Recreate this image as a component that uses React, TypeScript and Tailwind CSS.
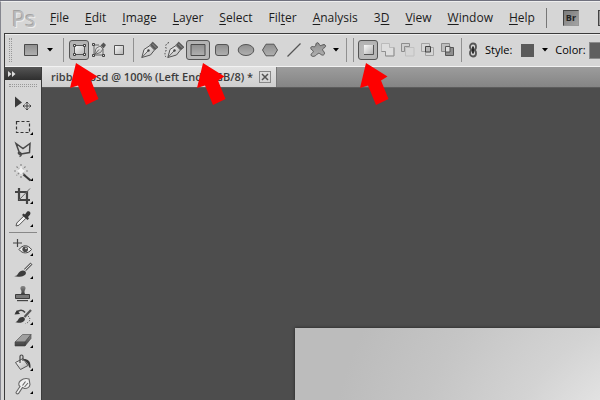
import React from "react";
import clsx from "clsx";

const menus = [
  { label: "File", key: 0 },
  { label: "Edit", key: 0 },
  { label: "Image", key: 0 },
  { label: "Layer", key: 0 },
  { label: "Select", key: 0 },
  { label: "Filter", key: 3 },
  { label: "Analysis", key: 0 },
  { label: "3D", key: 1 },
  { label: "View", key: 0 },
  { label: "Window", key: 0 },
  { label: "Help", key: 0 },
];

const stroke = { stroke: "#484848", strokeWidth: 1.2, fill: "none" };

// Shared gradients for the toolbar and the tool icons
function Gradients() {
  return (
    <svg width="0" height="0" className="absolute" aria-hidden="true">
      <defs>
        <linearGradient id="fill" x1="0" y1="0" x2="0" y2="1">
          <stop offset="0" stopColor="#8f8f8f" />
          <stop offset="1" stopColor="#b0b0b0" />
        </linearGradient>
        <linearGradient id="pale" x1="0" y1="0" x2="1" y2="1">
          <stop offset="0" stopColor="#fafafa" />
          <stop offset="1" stopColor="#b4b4b4" />
        </linearGradient>
        <linearGradient id="dark" x1="0" y1="0" x2="0" y2="1">
          <stop offset="0" stopColor="#8b8b8b" />
          <stop offset="1" stopColor="#3d3d3d" />
        </linearGradient>
      </defs>
    </svg>
  );
}

function Svg({ children }: { children: React.ReactNode }) {
  return (
    <svg width="20" height="20" viewBox="0 0 20 20" className="shrink-0" aria-hidden="true">
      {children}
    </svg>
  );
}

function Caret({ label }: { label: string }) {
  return (
    <button aria-label={label} className="flex h-5 w-3 shrink-0 items-center justify-center">
      <svg width="6" height="4" viewBox="0 0 6 4" aria-hidden="true">
        <path d="M0 0h6L3 3.5z" fill="#000" />
      </svg>
    </button>
  );
}

const Divider = () => <div className="h-6 w-px shrink-0 bg-[#909090]" />;

const Nib = () => (
  <>
    <path d="M1.8 17.5L4 9.500 10 5.500 14.500 10 10.500 15z" fill="url(#pale)" stroke="#555" />
    <path d="M2 17.300l6-6.300" stroke="#555" strokeWidth="0.900" />
    <circle cx="8.500" cy="10.500" r="1.200" fill="#444" />
    <path d="M10.200 4.800L12.700 2 18 7.200 15 9.800z" fill="#5a5a5a" stroke="#444" strokeWidth="0.600" />
    <path d="M12.300 3.800l4 4" stroke="#9a9a9a" strokeWidth="0.900" />
  </>
);

const modes = [
  {
    label: "Shape layers",
    icon: (
      <>
        <path d="M5.500 5.500h10v9h-10z" fill="url(#pale)" stroke="#565656" />
        {[4, 14].map((x) => [4, 13].map((y) => <path key={x + "-" + y} d={`M${x + 0.5} ${y + 0.5}h2v2h-2z`} fill="#eee" stroke="#3f3f3f" />))}
      </>
    ),
  },
  {
    label: "Paths",
    icon: (
      <>
        <path d="M5 6v9h9V9M5 5h5" fill="none" stroke="#666" />
        <path d="M5.500 14.500l1.500-6 4-2.500 3 3-2.500 3.500z" fill="url(#pale)" stroke="#666" strokeWidth="0.900" />
        <path d="M5.500 14.500l4.500-5" stroke="#555" strokeWidth="0.900" />
        <path d="M11.500 5.500l3-3 2.500 2.500-2.500 3.500z" fill="#555" />
        {[[3, 3], [3, 14], [13, 14]].map(([x, y]) => (
          <path key={x + "-" + y} d={`M${x + 0.5} ${y + 0.5}h2v2h-2z`} fill="#ddd" stroke="#444" />
        ))}
      </>
    ),
  },
  {
    label: "Fill pixels",
    icon: <path d="M5.500 5.500h9v9h-9z" fill="url(#pale)" stroke="#555" />,
  },
];

const shapes = [
  { label: "Pen", icon: <Nib /> },
  {
    label: "Freeform pen",
    icon: (
      <>
        <g transform="translate(2 0)">
          <Nib />
        </g>
        <path d="M5 2.500c-3 1-4 3.500-3 5.500s-1 4-1 5.500 0 3 1.500 4" fill="none" stroke="#444" strokeDasharray="1.500 1.500" />
      </>
    ),
  },
  { label: "Rectangle", icon: <path d="M3 4.500h14v11H3z" fill="url(#fill)" stroke="#4a4a4a" /> },
  { label: "Rounded rectangle", icon: <rect x="3.500" y="4.500" width="13" height="11" rx="2.500" fill="url(#fill)" stroke="#555" /> },
  { label: "Ellipse", icon: <ellipse cx="10" cy="10" rx="7.800" ry="5.500" fill="url(#fill)" stroke="#555" /> },
  { label: "Polygon", icon: <path d="M2.500 10L6 4.200h8l3.500 5.800-3.500 5.800H6z" fill="url(#fill)" stroke="#555" /> },
  { label: "Line", icon: <path d="M3.500 16.500l13-13" stroke="#555" strokeWidth="1.300" /> },
  {
    label: "Custom shape",
    icon: (
      <path
        d="M7.800 5C8 3 9 2.200 10.300 3c1 .8.900 1.800 1.700 2.600 1 .3 2.400-1 4-1 1.600.2 2.200 1.600 1 2.700-1 .8-2.400 1.200-2.400 2.300.2 1.400 1.800 2 1.900 3.700 0 1.500-1.500 2.200-2.800 1.600-1.200-.6-1.900-1.600-3-1.600-1.300.1-1.800 1.500-3 2.200-1.300.9-2.300 1-3.500.7-1.400-.4-1.500-1.700-.5-2.700.8-.9 1.700-1.400 1.600-2.300-.2-1-2.300-1.300-2.500-2.900C2.700 6.600 4 6.200 5.500 6.700c1.300.3 2.200-.4 2.300-1.700z"
        fill="url(#fill)"
        stroke="#555"
      />
    ),
  },
];

const combine = [
  {
    label: "New shape layer",
    icon: (
      <>
        <path d="M6 5h9v9H6z" fill="url(#pale)" />
        <path d="M6 14.500h9.500V5" fill="none" stroke="#555" />
      </>
    ),
  },
  {
    label: "Add to shape area",
    icon: (
      <>
        <path d="M3.500 3.500h8v4h4.500v8.500H7.500v-4.500h-4z" fill="#dedede" stroke="#bbb" />
        <path d="M3.500 11.500h4V16H16V7.500" fill="none" stroke="#909090" />
      </>
    ),
  },
  {
    label: "Subtract from shape area",
    icon: (
      <>
        <path d="M7.500 7.500H16V16H7.500z" fill="none" stroke="#c0c0c0" />
        <path d="M3.500 3.500h8v3h-5v5h-3z" fill="#cfcfcf" stroke="#8d8d8d" />
      </>
    ),
  },
  {
    label: "Intersect shape areas",
    icon: (
      <>
        <path d="M3.500 3.500h8v8h-8zM7.500 7.500h8v8h-8z" fill="none" stroke="#a2a2a2" />
        <path d="M7.500 6.500h5v5.500h-5z" fill="#b4b4b4" stroke="#444" />
      </>
    ),
  },
  {
    label: "Exclude overlapping areas",
    icon: (
      <>
        <path d="M3.500 3.500h8v8h-8z" fill="#bdbdbd" stroke="#888" />
        <path d="M7.500 7.500h8v8h-8z" fill="#8f8f8f" stroke="#555" />
        <path d="M7.500 6.500h4.500V12H7.500z" fill="#dcdcdc" stroke="#555" />
      </>
    ),
  },
];

const tools = [
  {
    label: "Move",
    plain: true,
    icon: (
      <>
        <path d="M2 2.500v11l7-5z" fill="#3a3a3a" />
        <path d="M10 12h8M14 8v8M12.500 9.500L14 8l1.500 1.500M12.500 14.500L14 16l1.500-1.500M11.500 10.500L10 12l1.500 1.500M16.500 10.500L18 12l-1.500 1.500" fill="none" stroke="#444" />
      </>
    ),
  },
  { label: "Marquee", icon: <path d="M3.500 4.500h13v11h-13z" fill="none" stroke="#333" strokeWidth="1.200" strokeDasharray="3 2" /> },
  { label: "Lasso", icon: <path d="M6.500 13L3 3.500l7 5 7-5-.5 9-8.500 1.500c-3 1-3.500-2.500-1-1.500 2 1 2 3-.5 4" {...stroke} strokeWidth={1.5} /> },
  {
    label: "Magic wand",
    icon: (
      <>
        <path d="M8 1v14M1 8h14M3.500 3.500l9 9M12.500 3.500l-9 9" stroke="#888" strokeWidth="1.200" strokeDasharray="2 1" />
        <path d="M8 2.500l1.500 3.500 3.500 2-3.500 1.500L8 13 6.500 9.500 3 8l3.500-2z" fill="#f0f0f0" />
        <path d="M10.500 11.500l7 6" stroke="#3b3b3b" strokeWidth="2.200" />
      </>
    ),
  },
  {
    label: "Crop",
    icon: (
      <>
        <path d="M6 2v12h11M2 6h12v12" fill="none" stroke="#444" strokeWidth="2.200" />
        <path d="M6 14L17 2.500" stroke="#666" />
      </>
    ),
  },
  {
    label: "Eyedropper",
    icon: (
      <>
        <path d="M3 17l.8-3 7-7 2.200 2.200-7 7z" fill="#f2f2f2" stroke="#555" />
        <path d="M9 6l1.500-1.500L12 5.500l2-2.700c2-1.500 4.500.7 3 3L15 8l1 1.500-1.500 1.500z" fill="#383838" />
      </>
    ),
  },
  {
    label: "Spot healing brush",
    icon: (
      <>
        <path d="M4.500 1v8M0 5h9" stroke="#444" strokeWidth="1.200" />
        <path d="M6 11.500c3.500-5 9-5 12.500 0-3.500 4.500-9 4.500-12.500 0z" fill="#eee" stroke="#444" />
        <circle cx="12.200" cy="11.200" r="2.800" fill="#4a4a4a" />
        <circle cx="13" cy="10.300" r="0.900" fill="#ddd" />
      </>
    ),
  },
  {
    label: "Brush",
    icon: (
      <>
        <path d="M18.500 2.500L12 9" stroke="#666" strokeWidth="3" />
        <path d="M18 3L12 9" stroke="#ddd" />
        <path d="M1 15c3 .3 3-1 4.500-3s4.500-3.500 7-1.500c1.500 2.500-1 4.500-4 5-3 .5-5.500.4-7.500-.5z" fill="#3d3d3d" />
      </>
    ),
  },
  {
    label: "Clone stamp",
    icon: (
      <>
        <path d="M10 2c2.500 0 3.200 2.200 2 4-.8 1.200-.5 3 0 4H8c.5-1 .8-2.800 0-4-1.200-1.800-.5-4 2-4z" fill="url(#dark)" />
        <path d="M2.500 10.500h14v4h-14z" fill="#777" stroke="#3c3c3c" />
        <path d="M4 16h11v1.200H4z" fill="#444" />
      </>
    ),
  },
  {
    label: "History brush",
    icon: (
      <>
        <path d="M3 6c3-3.500 7-3.500 9-.5" fill="none" stroke="#444" strokeWidth="1.500" />
        <path d="M1.500 7.500L4 3l3 4z" fill="#333" />
        <path d="M18 3l-6.500 7" stroke="#555" strokeWidth="2.200" />
        <path d="M2 15c3 0 2.500-2.500 5-4.500 3-1.500 6 .5 4.500 3-2 3-7 2.500-9.500 1.500z" fill="#3a3a3a" />
        <path d="M15 9c3 2 2.500 6-2.500 7.500" fill="none" stroke="#444" strokeDasharray="1 1.500" />
      </>
    ),
  },
  {
    label: "Eraser",
    icon: (
      <>
        <path d="M2 12L9.500 4.500H18L12 12z" fill="#a0a0a0" stroke="#666" strokeWidth="0.800" />
        <path d="M2 12h10v4H2zM12 12l6-7.500v4L12 16z" fill="url(#dark)" stroke="#444" strokeWidth="0.600" />
      </>
    ),
  },
  {
    label: "Paint bucket",
    icon: (
      <>
        <path d="M2.500 9.500L10 5.500l5 7-7.500 4z" fill="url(#pale)" stroke="#555" />
        <path d="M7 10V3.500C7 1.500 10 1.500 10 3.500V8" {...stroke} />
        <path d="M10.500 6c4.500 0 7.500 2 7 9-2 0-1.500-3-3-4.500z" fill="#383838" />
      </>
    ),
  },
  {
    label: "Smudge",
    icon: (
      <path
        d="M3 16.500l4-6c-2-1.500-1.500-4.500.8-6 2.400-2 5.200-2.500 8.200-1.500l1 5.500c-.5 3-3 4-5.500 4l-2-1L5.500 17.500c-1.200.8-2.500.3-2.500-1zM9.500 9.500l3-4M11.500 11l3.500-4"
        fill="#f1f1f1"
        stroke="#666"
        strokeWidth="1.100"
      />
    ),
  },
  { label: "Dodge", icon: <circle cx="8" cy="8" r="5" fill="#777" stroke="#444" /> },
];

const pressed = "rounded-[3px] border border-[#555] bg-[#b9b9b9] shadow-inner";

function Tool({ tool }: { tool: (typeof tools)[number] }) {
  return (
    <button aria-label={tool.label} className="relative flex h-[23px] w-full shrink-0 items-center justify-center">
      <Svg>{tool.icon}</Svg>
      {!tool.plain && (
        <svg width="3" height="3" className="absolute right-2 bottom-[3px]" aria-hidden="true">
          <path d="M3 0v3H0z" fill="#000" />
        </svg>
      )}
    </button>
  );
}

function Arrow({ className }: { className: string }) {
  return (
    <svg width="30" height="44" viewBox="0 0 30 44" className={clsx("absolute top-[61px]", className)} aria-hidden="true">
      <path d="M7 1L28.500 14.500 22 18.500 29.500 37 17 43 9 23.500 1 26z" fill="#fe0000" />
    </svg>
  );
}

export default function App() {
  return (
    <div className="relative flex h-screen flex-col overflow-hidden border-t border-[#70717e] bg-[#d6d6d6] font-['Open_Sans','Noto_Sans',sans-serif] text-black">
      <Gradients />

      {/* Menu bar */}
      <header className="flex h-8 shrink-0 items-center overflow-hidden border-t border-l border-t-[#eee] border-l-[#85868f] pl-[11px]">
        <div className="w-9 shrink-0 text-[22px] leading-6 text-[#bcbcbc] [text-shadow:-1px_-1px_0_#a2a2a2,1px_1px_0_#eee]">Ps</div>
        <nav className="flex shrink-0 gap-4 pl-[2px] text-xs text-[#1c1c1c]">
          {menus.map((m) => (
            <button key={m.label} className="whitespace-nowrap">
              {m.label.slice(0, m.key)}
              <span className="underline underline-offset-2">{m.label[m.key]}</span>
              {m.label.slice(m.key + 1)}
            </button>
          ))}
        </nav>
        <div className="ml-[11px] h-5 w-px shrink-0 bg-[#777]" />
        <button className="ml-4 flex size-4 shrink-0 items-center justify-center border border-t-[#444] border-r-[#999] border-b-[#999] border-l-[#444] bg-linear-to-br from-[#7c7c7c] to-[#a4a4a4] text-[9px] font-bold text-[#222]">Br</button>
        <div className="ml-[19px] size-4 shrink-0 border border-[#444] bg-[#999]" />
      </header>

      <div className="flex min-h-0 flex-1 border-l border-[#85868f] pl-[3px]">
        <div className="flex min-w-0 flex-1 flex-col border-t border-l border-[#3b3b3b]">
          {/* Options bar */}
          <div className="flex h-[33px] shrink-0 items-center overflow-hidden border-t border-b border-t-[#eee] border-b-[#f2f2f2] pb-px">
            <div className="ml-1 h-6 w-[3px] shrink-0 border-x border-dotted border-[#999]" />
            <button aria-label="Current tool" className="ml-[9px] flex size-5 shrink-0 items-center">
              <Svg>
                <path d="M3.500 4.500h13v11h-13z" fill="url(#fill)" stroke="#4a4a4a" />
              </Svg>
            </button>
            <div className="ml-[3px] flex shrink-0">
              <Caret label="Tool presets" />
            </div>
            <div className="ml-[7px] flex shrink-0 items-center">
              <Divider />
            </div>
            <div className="ml-[5px] flex shrink-0">
              {modes.map((m, i) => (
                <button key={m.label} aria-label={m.label} aria-pressed={i === 0} className={clsx("flex size-5 items-center justify-center", i === 0 && pressed)}>
                  <Svg>{m.icon}</Svg>
                </button>
              ))}
            </div>
            <div className="mx-1 flex shrink-0">
              <Divider />
            </div>
            <div className="flex shrink-0">
              {shapes.map((s, i) => (
                <button key={s.label} aria-label={s.label} aria-pressed={i === 2} className={clsx("flex h-5 w-6 items-center justify-center", i === 2 && pressed)}>
                  <Svg>{s.icon}</Svg>
                </button>
              ))}
              <Caret label="Shape options" />
            </div>
            <div className="mx-1 flex shrink-0 gap-[6px]">
              <Divider />
              <Divider />
            </div>
            <div className="flex shrink-0">
              {combine.map((c, i) => (
                <button key={c.label} aria-label={c.label} aria-pressed={i === 0} className={clsx("flex size-5 items-center justify-center", i === 0 && pressed)}>
                  <Svg>{c.icon}</Svg>
                </button>
              ))}
            </div>
            <div className="ml-[3px] flex shrink-0">
              <Divider />
            </div>
            <button aria-label="Link style" className="ml-[6px] shrink-0">
              <svg width="10" height="16" viewBox="0 0 10 16" fill="none" aria-hidden="true">
                <rect x="2" y="1.500" width="6" height="6.500" rx="3" stroke="#555" strokeWidth="1.800" />
                <rect x="2" y="8" width="6" height="6.500" rx="3" stroke="#555" strokeWidth="1.800" />
                <path d="M5 4.500v7" stroke="#222" strokeWidth="1.800" />
              </svg>
            </button>
            <span className="ml-[7px] shrink-0 text-[11px]">Style:</span>
            <button aria-label="Style" className="ml-[9px] size-[13px] shrink-0 bg-[#5a5a5a]" />
            <div className="ml-[5px] flex shrink-0">
              <Caret label="Style picker" />
            </div>
            <span className="ml-1 shrink-0 text-[11px]">Color:</span>
            <button aria-label="Color" className="ml-[3px] h-[17px] w-6 shrink-0 border border-[#8c8c8c] bg-[#5f5f5f]" />
          </div>

          <div className="flex min-h-0 flex-1">
            {/* Tools panel */}
            <aside className="flex w-[37px] shrink-0 flex-col overflow-hidden border-r border-[#3b3b3b]">
              <button aria-label="Collapse panel" className="flex h-[13px] w-full shrink-0 items-center bg-linear-to-b from-[#555] to-[#2f2f2f] pl-[3px]">
                <svg width="8" height="6" viewBox="0 0 8 6" fill="#ddd" aria-hidden="true">
                  <path d="M0 0l3.500 3L0 6zM4 0l3.500 3L4 6z" />
                </svg>
              </button>
              <div className="mx-1 mt-1 mb-[5px] h-[3px] shrink-0 border-y border-dotted border-[#999]" />
              {tools.slice(0, 6).map((t) => (
                <Tool key={t.label} tool={t} />
              ))}
              <div className="mx-1 mt-[2px] mb-[3px] h-px shrink-0 bg-[#888]" />
              {tools.slice(6).map((t) => (
                <Tool key={t.label} tool={t} />
              ))}
            </aside>

            {/* Document window */}
            <main className="flex min-w-0 flex-1 flex-col">
              <div className="flex h-[21px] shrink-0 border-b border-[#5c5c5c] bg-linear-to-b from-[#9c9c9c] to-[#858585]">
                <div className="flex shrink-0 items-center gap-[6px] border-r border-[#777] bg-linear-to-b from-[#e2e2e2] to-[#cecece] pr-[5px] pl-[9px]">
                  <span className="text-[11px] font-semibold whitespace-nowrap text-[#3c3c3c]">ribbon.psd @ 100% (Left End, RGB/8) *</span>
                  <button aria-label="Close document" className="size-3 border border-[#888]">
                    <svg width="10" height="10" viewBox="0 0 10 10" stroke="#555" strokeWidth="1.500" aria-hidden="true">
                      <path d="M2 2l6 6M8 2L2 8" />
                    </svg>
                  </button>
                </div>
              </div>
              <div className="flex min-h-0 flex-1 bg-[#4d4d4d] pt-60 pl-[253px]">
                <div className="flex-1 bg-[radial-gradient(circle_at_125%_220%,#ececec_60px,#e2e2e2_115px,#d3d3d3_175px,#c5c5c5_265px,#bcbcbc_350px)] shadow-[0_0_3px_#222]" />
              </div>
            </main>
          </div>
        </div>
      </div>

      {/* Callout arrows */}
      <Arrow className="left-[69px]" />
      <Arrow className="left-[196px]" />
      <Arrow className="left-[359px]" />
    </div>
  );
}
